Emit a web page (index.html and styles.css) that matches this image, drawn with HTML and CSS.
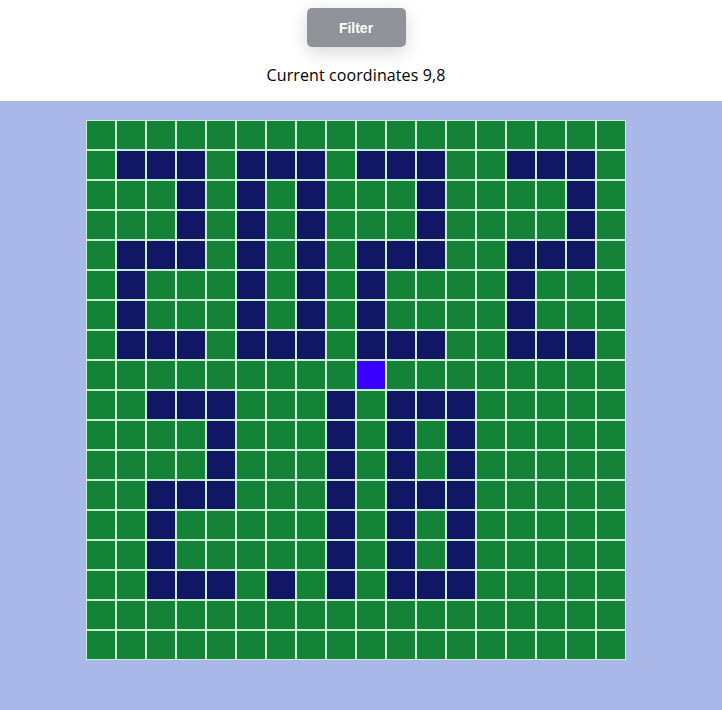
FILE: index.html
```html
<!DOCTYPE html>
<html lang="en">
<head>
<meta charset="utf-8">
<title>Grid</title>
<link rel="stylesheet" href="styles.css">
</head>
<body>
<header class="top">
  <button class="filter-btn" type="button">Filter</button>
  <p class="coords">Current coordinates 9,8</p>
</header>
<main class="stage">
  <div class="board">
    <i></i><i></i><i></i><i></i><i></i><i></i><i></i><i></i><i></i><i></i><i></i><i></i><i></i><i></i><i></i><i></i><i></i><i></i>
    <i></i><i class="w"></i><i class="w"></i><i class="w"></i><i></i><i class="w"></i><i class="w"></i><i class="w"></i><i></i><i class="w"></i><i class="w"></i><i class="w"></i><i></i><i></i><i class="w"></i><i class="w"></i><i class="w"></i><i></i>
    <i></i><i></i><i></i><i class="w"></i><i></i><i class="w"></i><i></i><i class="w"></i><i></i><i></i><i></i><i class="w"></i><i></i><i></i><i></i><i></i><i class="w"></i><i></i>
    <i></i><i></i><i></i><i class="w"></i><i></i><i class="w"></i><i></i><i class="w"></i><i></i><i></i><i></i><i class="w"></i><i></i><i></i><i></i><i></i><i class="w"></i><i></i>
    <i></i><i class="w"></i><i class="w"></i><i class="w"></i><i></i><i class="w"></i><i></i><i class="w"></i><i></i><i class="w"></i><i class="w"></i><i class="w"></i><i></i><i></i><i class="w"></i><i class="w"></i><i class="w"></i><i></i>
    <i></i><i class="w"></i><i></i><i></i><i></i><i class="w"></i><i></i><i class="w"></i><i></i><i class="w"></i><i></i><i></i><i></i><i></i><i class="w"></i><i></i><i></i><i></i>
    <i></i><i class="w"></i><i></i><i></i><i></i><i class="w"></i><i></i><i class="w"></i><i></i><i class="w"></i><i></i><i></i><i></i><i></i><i class="w"></i><i></i><i></i><i></i>
    <i></i><i class="w"></i><i class="w"></i><i class="w"></i><i></i><i class="w"></i><i class="w"></i><i class="w"></i><i></i><i class="w"></i><i class="w"></i><i class="w"></i><i></i><i></i><i class="w"></i><i class="w"></i><i class="w"></i><i></i>
    <i></i><i></i><i></i><i></i><i></i><i></i><i></i><i></i><i></i><i class="here"></i><i></i><i></i><i></i><i></i><i></i><i></i><i></i><i></i>
    <i></i><i></i><i class="w"></i><i class="w"></i><i class="w"></i><i></i><i></i><i></i><i class="w"></i><i></i><i class="w"></i><i class="w"></i><i class="w"></i><i></i><i></i><i></i><i></i><i></i>
    <i></i><i></i><i></i><i></i><i class="w"></i><i></i><i></i><i></i><i class="w"></i><i></i><i class="w"></i><i></i><i class="w"></i><i></i><i></i><i></i><i></i><i></i>
    <i></i><i></i><i></i><i></i><i class="w"></i><i></i><i></i><i></i><i class="w"></i><i></i><i class="w"></i><i></i><i class="w"></i><i></i><i></i><i></i><i></i><i></i>
    <i></i><i></i><i class="w"></i><i class="w"></i><i class="w"></i><i></i><i></i><i></i><i class="w"></i><i></i><i class="w"></i><i class="w"></i><i class="w"></i><i></i><i></i><i></i><i></i><i></i>
    <i></i><i></i><i class="w"></i><i></i><i></i><i></i><i></i><i></i><i class="w"></i><i></i><i class="w"></i><i></i><i class="w"></i><i></i><i></i><i></i><i></i><i></i>
    <i></i><i></i><i class="w"></i><i></i><i></i><i></i><i></i><i></i><i class="w"></i><i></i><i class="w"></i><i></i><i class="w"></i><i></i><i></i><i></i><i></i><i></i>
    <i></i><i></i><i class="w"></i><i class="w"></i><i class="w"></i><i></i><i class="w"></i><i></i><i class="w"></i><i></i><i class="w"></i><i class="w"></i><i class="w"></i><i></i><i></i><i></i><i></i><i></i>
    <i></i><i></i><i></i><i></i><i></i><i></i><i></i><i></i><i></i><i></i><i></i><i></i><i></i><i></i><i></i><i></i><i></i><i></i>
    <i></i><i></i><i></i><i></i><i></i><i></i><i></i><i></i><i></i><i></i><i></i><i></i><i></i><i></i><i></i><i></i><i></i><i></i>
  </div>
</main>
</body>
</html>
```

FILE: styles.css
```css
html, body {
  margin: 0;
  padding: 0;
  background: #ffffff;
}

body {
  font-family: "Open Sans", "Noto Sans", sans-serif;
  color: #000;
  height: 710px;
  display: flex;
  flex-direction: column;
}

.top {
  height: 101px;
  box-sizing: border-box;
  padding: 8px 10px 0 0;
  display: flex;
  flex-direction: column;
  align-items: center;
}

.filter-btn {
  width: 99px;
  height: 39px;
  border: none;
  border-radius: 5px;
  background: #8f9299;
  color: #ffffff;
  font-family: "Liberation Sans", Arial, sans-serif;
  font-weight: bold;
  font-size: 14px;
  box-shadow: 0 5px 18px rgba(0, 0, 0, 0.16);
  cursor: pointer;
}

.coords {
  margin: 17px 0 0;
  font-size: 16px;
  line-height: 22px;
  letter-spacing: 0.1px;
}

.stage {
  flex: 1;
  background: #aab7e9;
  padding: 19px 10px 0 0;
  display: flex;
  justify-content: center;
  align-items: flex-start;
}

.board {
  display: grid;
  grid-template-columns: repeat(18, 30px);
  grid-auto-rows: 30px;
}

.board i {
  display: block;
  box-sizing: border-box;
  border: 1px solid #c6eed3;
  background: #158337;
}

.board i.w {
  background: #111665;
}

.board i.here {
  background: #3a00ff;
}
```
